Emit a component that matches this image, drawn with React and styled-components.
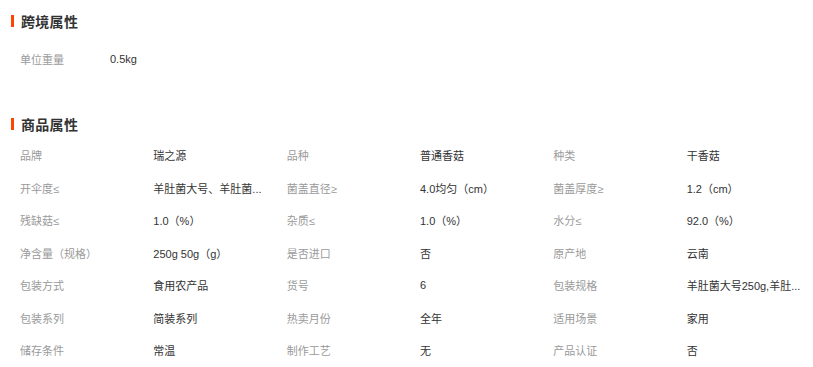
import React from "react";
import styled, { createGlobalStyle } from "styled-components";

const GlobalStyle = createGlobalStyle`
  body {
    margin: 0;
    background: #fff;
    font-family: "Liberation Sans", "Noto Sans CJK SC", sans-serif;
  }
`;

const crossAttrs = [{ label: "单位重量", value: "0.5kg" }];

// long values are shown already shortened, as on the page
const productAttrs = [
  ["品牌", "瑞之源"],
  ["品种", "普通香菇"],
  ["种类", "干香菇"],
  ["开伞度≤", "羊肚菌大号、羊肚菌..."],
  ["菌盖直径≥", "4.0均匀（cm）"],
  ["菌盖厚度≥", "1.2（cm）"],
  ["残缺菇≤", "1.0（%）"],
  ["杂质≤", "1.0（%）"],
  ["水分≤", "92.0（%）"],
  ["净含量（规格）", "250g 50g（g）"],
  ["是否进口", "否"],
  ["原产地", "云南"],
  ["包装方式", "食用农产品"],
  ["货号", "6"],
  ["包装规格", "羊肚菌大号250g,羊肚..."],
  ["包装系列", "简装系列"],
  ["热卖月份", "全年"],
  ["适用场景", "家用"],
  ["储存条件", "常温"],
  ["制作工艺", "无"],
  ["产品认证", "否"],
];

const Page = styled.div`
  width: 813px;
  overflow: hidden;
  padding-top: 11px;
`;

const Section = styled.section`
  margin-top: ${(p) => p.top || 0}px;
`;

const Title = styled.h3`
  display: flex;
  align-items: center;
  gap: 7px;
  height: 20px;
  margin: 0;
  padding-left: 11px;
  font-size: 14px;
  font-weight: 700;
  color: #333;
  letter-spacing: 0.3px;

  &::before {
    content: "";
    width: 3px;
    height: 12px;
    background: #ff4400;
  }
`;

const SimpleRow = styled.div`
  display: grid;
  grid-template-columns: 90px auto;
  align-items: center;
  height: 32.5px;
  margin-top: 11.75px;
  padding-left: 20px;
  font-size: 11px;
`;

const Grid = styled.div`
  display: grid;
  grid-template-columns: repeat(6, 133.33px);
  grid-auto-rows: 32.5px;
  align-items: center;
  margin-top: 4.75px;
  padding-left: 20px;
  font-size: 11px;
`;

const Label = styled.span`
  color: #9a9a9a;
  white-space: nowrap;
`;

const Value = styled.span`
  color: #333;
  white-space: nowrap;
`;

export default function App() {
  return (
    <Page>
      <GlobalStyle />
      <Section>
        <Title>跨境属性</Title>
        {crossAttrs.map((a) => (
          <SimpleRow key={a.label}>
            <Label>{a.label}</Label>
            <Value>{a.value}</Value>
          </SimpleRow>
        ))}
      </Section>
      <Section top={38.75}>
        <Title>商品属性</Title>
        <Grid>
          {productAttrs.map(([label, value]) => (
            <React.Fragment key={label}>
              <Label>{label}</Label>
              <Value>{value}</Value>
            </React.Fragment>
          ))}
        </Grid>
      </Section>
    </Page>
  );
}
